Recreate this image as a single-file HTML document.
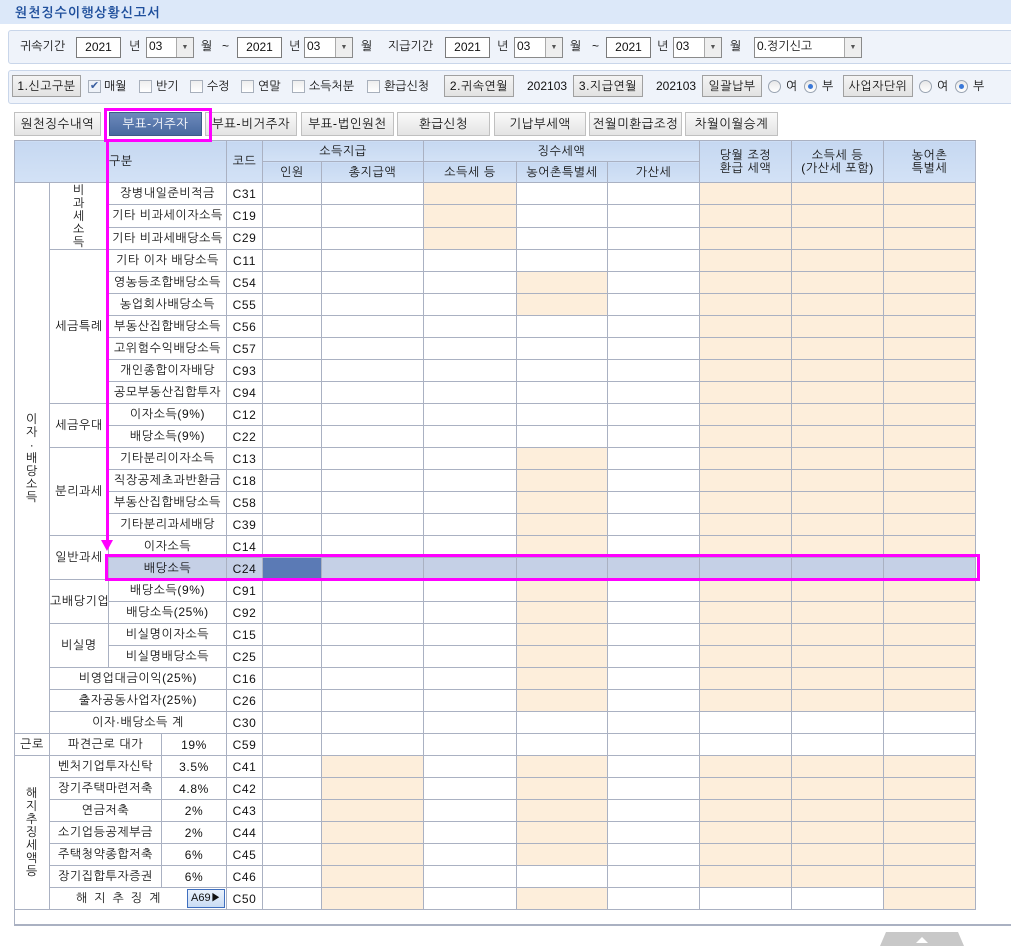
<!DOCTYPE html>
<html><head><meta charset="utf-8"><style>
*{box-sizing:border-box;margin:0;padding:0}
body{width:1011px;height:949px;overflow:hidden;background:#fff;font-family:"Liberation Sans","NanumGothic","Noto Sans CJK KR",sans-serif;font-size:12px;color:#111;position:relative}
.abs{position:absolute}
.title{left:0;top:0;width:1011px;height:24px;background:#dce8f9;color:#1f4f9c;font-weight:bold;font-size:13px;padding:5px 0 0 15px;letter-spacing:1px}
.panel{left:8px;width:1010px;height:34px;background:#eff3fa;border:1px solid #c9d6ea;border-radius:3px}
.t{position:absolute;font-size:12px;white-space:nowrap}
.inp{position:absolute;height:21px;border:1px solid #7a7a7a;background:#fff;text-align:center;line-height:19px}
.sel{position:absolute;height:21px;border:1px solid #8a8a8a;background:#fff;line-height:17px;padding-left:2px}
.sel:after{content:"▼";position:absolute;right:0;top:0;width:16px;height:19px;border-left:1px solid #aaa;background:#eee;font-size:7px;text-align:center;line-height:19px;color:#555}
.btn{position:absolute;height:22px;border:1px solid #a0a0a0;background:linear-gradient(#f4f4f4,#e2e2e2);text-align:center;line-height:20px;letter-spacing:0.5px}
.cb{position:absolute;width:13px;height:13px;border:1px solid #a8b0bc;background:linear-gradient(#eee,#fff)}
.rd{position:absolute;width:13px;height:13px;border:1px solid #9aa4b2;border-radius:50%;background:linear-gradient(#e8e8e8,#fff)}
.rd.on:after{content:"";position:absolute;left:3px;top:3px;width:5px;height:5px;border-radius:50%;background:#3a78d8}
.tab{position:absolute;top:112px;height:24px;border:1px solid #c0c0c0;background:linear-gradient(#fafafa,#e4e4e4);text-align:center;line-height:22px;font-size:12.5px;letter-spacing:0.5px}
.tab.on{background:linear-gradient(#6d89bb,#486a9f);color:#fff;border-color:#3d5a8a}
table{position:absolute;left:14px;top:140px;width:961px;border-collapse:collapse;table-layout:fixed}
td,th{border:1px solid #aab1c2;height:22px;text-align:center;font-weight:normal;padding:0;white-space:nowrap;letter-spacing:0.6px;font-size:12px}
th{background:linear-gradient(#c6d8f1,#d3e2f6);height:21px;line-height:13px}
.o{background:#fdeedb}
.s td{background:#c5d0e6}
.s td.d{background:#5b7ab5}
.v{line-height:13px}
</style></head><body>
<div class="abs title">원천징수이행상황신고서</div>

<div class="abs panel" style="top:30px"></div>
<span class="t" style="left:20px;top:39px">귀속기간</span>
<div class="inp" style="left:76px;top:37px;width:45px">2021</div>
<span class="t" style="left:129px;top:39px">년</span>
<div class="sel" style="left:146px;top:37px;width:48px">03</div>
<span class="t" style="left:201px;top:39px">월</span>
<span class="t" style="left:222px;top:39px">~</span>
<div class="inp" style="left:237px;top:37px;width:45px">2021</div>
<span class="t" style="left:289px;top:39px">년</span>
<div class="sel" style="left:304px;top:37px;width:49px">03</div>
<span class="t" style="left:361px;top:39px">월</span>
<span class="t" style="left:388px;top:39px">지급기간</span>
<div class="inp" style="left:445px;top:37px;width:45px">2021</div>
<span class="t" style="left:497px;top:39px">년</span>
<div class="sel" style="left:514px;top:37px;width:49px">03</div>
<span class="t" style="left:570px;top:39px">월</span>
<span class="t" style="left:592px;top:39px">~</span>
<div class="inp" style="left:606px;top:37px;width:45px">2021</div>
<span class="t" style="left:657px;top:39px">년</span>
<div class="sel" style="left:673px;top:37px;width:49px">03</div>
<span class="t" style="left:730px;top:39px">월</span>
<div class="sel" style="left:754px;top:37px;width:108px">0.정기신고</div>

<div class="abs panel" style="top:70px"></div>
<div class="btn" style="left:12px;top:75px;width:69px">1.신고구분</div>
<div class="cb" style="left:88px;top:80px;background:#eef2f8;color:#3a5fa0;font-size:11px;line-height:11px;text-align:center">✔</div><span class="t" style="left:104px;top:79px">매월</span>
<div class="cb" style="left:139px;top:80px"></div><span class="t" style="left:156px;top:79px">반기</span>
<div class="cb" style="left:190px;top:80px"></div><span class="t" style="left:207px;top:79px">수정</span>
<div class="cb" style="left:241px;top:80px"></div><span class="t" style="left:258px;top:79px">연말</span>
<div class="cb" style="left:292px;top:80px"></div><span class="t" style="left:309px;top:79px">소득처분</span>
<div class="cb" style="left:367px;top:80px"></div><span class="t" style="left:384px;top:79px">환급신청</span>
<div class="btn" style="left:444px;top:75px;width:70px">2.귀속연월</div>
<span class="t" style="left:527px;top:79px">202103</span>
<div class="btn" style="left:573px;top:75px;width:70px">3.지급연월</div>
<span class="t" style="left:656px;top:79px">202103</span>
<div class="btn" style="left:702px;top:75px;width:60px">일괄납부</div>
<div class="rd" style="left:768px;top:80px"></div><span class="t" style="left:786px;top:79px">여</span>
<div class="rd on" style="left:804px;top:80px"></div><span class="t" style="left:822px;top:79px">부</span>
<div class="btn" style="left:843px;top:75px;width:70px">사업자단위</div>
<div class="rd" style="left:919px;top:80px"></div><span class="t" style="left:937px;top:79px">여</span>
<div class="rd on" style="left:955px;top:80px"></div><span class="t" style="left:973px;top:79px">부</span>

<div class="tab" style="left:14px;width:87px">원천징수내역</div>
<div class="tab on" style="left:109px;width:93px">부표-거주자</div>
<div class="tab" style="left:205px;width:92px">부표-비거주자</div>
<div class="tab" style="left:301px;width:93px">부표-법인원천</div>
<div class="tab" style="left:397px;width:93px">환급신청</div>
<div class="tab" style="left:494px;width:92px">기납부세액</div>
<div class="tab" style="left:589px;width:93px">전월미환급조정</div>
<div class="tab" style="left:685px;width:93px">차월이월승계</div>

<table>
<colgroup><col style="width:35px"><col style="width:59px"><col style="width:53px"><col style="width:65px"><col style="width:36px"><col style="width:59px"><col style="width:102px"><col style="width:93px"><col style="width:91px"><col style="width:92px"><col style="width:92px"><col style="width:92px"><col style="width:92px"></colgroup>
<tr><th colspan="4" rowspan="2" style="text-align:left;padding-left:94px">구분</th><th rowspan="2">코드</th><th colspan="2">소득지급</th><th colspan="3">징수세액</th><th rowspan="2">당월 조정<br>환급 세액</th><th rowspan="2">소득세 등<br>(가산세 포함)</th><th rowspan="2">농어촌<br>특별세</th></tr>
<tr><th>인원</th><th>총지급액</th><th>소득세 등</th><th>농어촌특별세</th><th>가산세</th></tr>

<tr><td rowspan="25" class="v">이<br>자<br>·<br>배<br>당<br>소<br>득</td><td rowspan="3" class="v" style="vertical-align:top;padding-top:1px">비<br>과<br>세<br>소<br>득</td><td colspan="2">장병내일준비적금</td><td>C31</td><td></td><td></td><td class="o"></td><td></td><td></td><td class="o"></td><td class="o"></td><td class="o"></td></tr>
<tr><td colspan="2">기타 비과세이자소득</td><td>C19</td><td></td><td></td><td class="o"></td><td></td><td></td><td class="o"></td><td class="o"></td><td class="o"></td></tr>
<tr><td colspan="2">기타 비과세배당소득</td><td>C29</td><td></td><td></td><td class="o"></td><td></td><td></td><td class="o"></td><td class="o"></td><td class="o"></td></tr>
<tr><td rowspan="7">세금특례</td><td colspan="2">기타 이자 배당소득</td><td>C11</td><td></td><td></td><td></td><td></td><td></td><td class="o"></td><td class="o"></td><td class="o"></td></tr>
<tr><td colspan="2">영농등조합배당소득</td><td>C54</td><td></td><td></td><td></td><td class="o"></td><td></td><td class="o"></td><td class="o"></td><td class="o"></td></tr>
<tr><td colspan="2">농업회사배당소득</td><td>C55</td><td></td><td></td><td></td><td class="o"></td><td></td><td class="o"></td><td class="o"></td><td class="o"></td></tr>
<tr><td colspan="2">부동산집합배당소득</td><td>C56</td><td></td><td></td><td></td><td></td><td></td><td class="o"></td><td class="o"></td><td class="o"></td></tr>
<tr><td colspan="2">고위험수익배당소득</td><td>C57</td><td></td><td></td><td></td><td></td><td></td><td class="o"></td><td class="o"></td><td class="o"></td></tr>
<tr><td colspan="2">개인종합이자배당</td><td>C93</td><td></td><td></td><td></td><td></td><td></td><td class="o"></td><td class="o"></td><td class="o"></td></tr>
<tr><td colspan="2">공모부동산집합투자</td><td>C94</td><td></td><td></td><td></td><td></td><td></td><td class="o"></td><td class="o"></td><td class="o"></td></tr>
<tr><td rowspan="2">세금우대</td><td colspan="2">이자소득(9%)</td><td>C12</td><td></td><td></td><td></td><td></td><td></td><td class="o"></td><td class="o"></td><td class="o"></td></tr>
<tr><td colspan="2">배당소득(9%)</td><td>C22</td><td></td><td></td><td></td><td></td><td></td><td class="o"></td><td class="o"></td><td class="o"></td></tr>
<tr><td rowspan="4">분리과세</td><td colspan="2">기타분리이자소득</td><td>C13</td><td></td><td></td><td></td><td class="o"></td><td></td><td class="o"></td><td class="o"></td><td class="o"></td></tr>
<tr><td colspan="2">직장공제초과반환금</td><td>C18</td><td></td><td></td><td></td><td class="o"></td><td></td><td class="o"></td><td class="o"></td><td class="o"></td></tr>
<tr><td colspan="2">부동산집합배당소득</td><td>C58</td><td></td><td></td><td></td><td class="o"></td><td></td><td class="o"></td><td class="o"></td><td class="o"></td></tr>
<tr><td colspan="2">기타분리과세배당</td><td>C39</td><td></td><td></td><td></td><td class="o"></td><td></td><td class="o"></td><td class="o"></td><td class="o"></td></tr>
<tr><td rowspan="2">일반과세</td><td colspan="2">이자소득</td><td>C14</td><td></td><td></td><td></td><td class="o"></td><td></td><td class="o"></td><td class="o"></td><td class="o"></td></tr>
<tr class="s"><td colspan="2">배당소득</td><td>C24</td><td class="d"></td><td></td><td></td><td></td><td></td><td></td><td></td><td></td></tr>
<tr><td rowspan="2">고배당기업</td><td colspan="2">배당소득(9%)</td><td>C91</td><td></td><td></td><td></td><td class="o"></td><td></td><td class="o"></td><td class="o"></td><td class="o"></td></tr>
<tr><td colspan="2">배당소득(25%)</td><td>C92</td><td></td><td></td><td></td><td class="o"></td><td></td><td class="o"></td><td class="o"></td><td class="o"></td></tr>
<tr><td rowspan="2">비실명</td><td colspan="2">비실명이자소득</td><td>C15</td><td></td><td></td><td></td><td class="o"></td><td></td><td class="o"></td><td class="o"></td><td class="o"></td></tr>
<tr><td colspan="2">비실명배당소득</td><td>C25</td><td></td><td></td><td></td><td class="o"></td><td></td><td class="o"></td><td class="o"></td><td class="o"></td></tr>
<tr><td colspan="3">비영업대금이익(25%)</td><td>C16</td><td></td><td></td><td></td><td class="o"></td><td></td><td class="o"></td><td class="o"></td><td class="o"></td></tr>
<tr><td colspan="3">출자공동사업자(25%)</td><td>C26</td><td></td><td></td><td></td><td class="o"></td><td></td><td class="o"></td><td class="o"></td><td class="o"></td></tr>
<tr><td colspan="3">이자·배당소득 계</td><td>C30</td><td></td><td></td><td></td><td></td><td></td><td></td><td></td><td></td></tr>
<tr><td>근로</td><td colspan="2">파견근로 대가</td><td>19%</td><td>C59</td><td></td><td></td><td></td><td></td><td></td><td></td><td></td><td></td></tr>
<tr><td rowspan="7" class="v">해<br>지<br>추<br>징<br>세<br>액<br>등</td><td colspan="2">벤처기업투자신탁</td><td>3.5%</td><td>C41</td><td></td><td class="o"></td><td></td><td class="o"></td><td></td><td class="o"></td><td class="o"></td><td class="o"></td></tr>
<tr><td colspan="2">장기주택마련저축</td><td>4.8%</td><td>C42</td><td></td><td class="o"></td><td></td><td class="o"></td><td></td><td class="o"></td><td class="o"></td><td class="o"></td></tr>
<tr><td colspan="2">연금저축</td><td>2%</td><td>C43</td><td></td><td class="o"></td><td></td><td class="o"></td><td></td><td class="o"></td><td class="o"></td><td class="o"></td></tr>
<tr><td colspan="2">소기업등공제부금</td><td>2%</td><td>C44</td><td></td><td class="o"></td><td></td><td class="o"></td><td></td><td class="o"></td><td class="o"></td><td class="o"></td></tr>
<tr><td colspan="2">주택청약종합저축</td><td>6%</td><td>C45</td><td></td><td class="o"></td><td></td><td class="o"></td><td></td><td class="o"></td><td class="o"></td><td class="o"></td></tr>
<tr><td colspan="2">장기집합투자증권</td><td>6%</td><td>C46</td><td></td><td class="o"></td><td></td><td></td><td></td><td class="o"></td><td class="o"></td><td class="o"></td></tr>
<tr><td colspan="3" style="position:relative;text-align:left;padding-left:26px;letter-spacing:7px">해지추징계<span style="position:absolute;right:1px;top:1px;width:38px;height:19px;border:1px solid #3f6fbf;background:linear-gradient(#eaf2fc,#c9dcf4);font-size:11px;letter-spacing:0;line-height:17px;text-align:center">A69▶</span></td><td>C50</td><td></td><td class="o"></td><td></td><td class="o"></td><td></td><td></td><td></td><td class="o"></td></tr>
</table>
<div class="abs" style="left:14px;top:909px;width:997px;height:17px;border-left:1px solid #aab1c2;border-bottom:2px solid #aab1c2"></div>

<div class="abs" style="left:104px;top:108px;width:108px;height:34px;border:3px solid #ff00ff"></div>
<div class="abs" style="left:106px;top:141px;width:3px;height:400px;background:#ff00ff"></div>
<div class="abs" style="left:101px;top:540px;width:0;height:0;border-left:6px solid transparent;border-right:6px solid transparent;border-top:11px solid #ff00ff"></div>
<div class="abs" style="left:105px;top:554px;width:875px;height:27px;border:3px solid #ff00ff"></div>

<svg class="abs" style="left:880px;top:932px" width="84" height="14"><path d="M6 0 H78 L84 14 H0 Z" fill="#c8c8c8"/><path d="M36 11 L42 5 L48 11 Z" fill="#fff"/></svg>
</body></html>
